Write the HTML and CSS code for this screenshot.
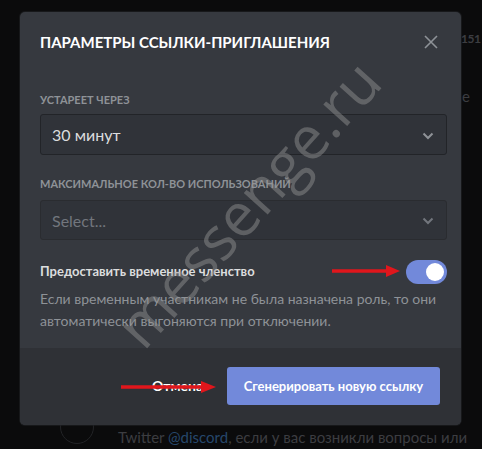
FILE: index.html
```html
<!DOCTYPE html>
<html lang="ru">
<head>
    <meta charset="UTF-8">
    <meta name="viewport" content="width=device-width, initial-scale=1.0">
    <title>Параметры ссылки-приглашения</title>
    <link rel="stylesheet" href="styles.css">
</head>
<body>
    <div class="backdrop">
        <div class="bg-text bg-top">151</div>
        <div class="bg-text bg-mid">е</div>
        <div class="bg-avatar"></div>
        <div class="bg-text bg-bottom">Twitter <span class="bg-link">@discord</span>, если у вас возникли вопросы или</div>

        <div class="modal">
            <div class="modal-header">
                <h2>Параметры ссылки-приглашения</h2>
                <svg class="close" width="16" height="16" viewBox="0 0 16 16">
                    <path d="M2 2 L14 14 M14 2 L2 14" stroke="#8e9297" stroke-width="1.6" fill="none"/>
                </svg>
            </div>

            <div class="modal-body">
                <div class="label">Устареет через</div>
                <div class="select">
                    <span>30 минут</span>
                    <svg class="chevron" width="12" height="8" viewBox="0 0 12 8">
                        <path d="M1.5 1.5 L6 6 L10.5 1.5" stroke="#8e9297" stroke-width="2" fill="none"/>
                    </svg>
                </div>

                <div class="label label-gap">Максимальное кол-во использований</div>
                <div class="select placeholder">
                    <span>Select...</span>
                    <svg class="chevron" width="12" height="8" viewBox="0 0 12 8">
                        <path d="M1.5 1.5 L6 6 L10.5 1.5" stroke="#72767d" stroke-width="2" fill="none"/>
                    </svg>
                </div>

                <div class="toggle-row">
                    <span class="toggle-title">Предоставить временное членство</span>
                    <div class="toggle"><div class="knob"></div></div>
                </div>
                <p class="note">Если временным участникам не была назначена роль, то они автоматически выгоняются при отключении.</p>
            </div>

            <div class="modal-footer">
                <button class="btn-cancel">Отмена</button>
                <button class="btn-primary">Сгенерировать новую ссылку</button>
            </div>
        </div>

        <!-- annotation arrows -->
        <svg class="arrow arrow-toggle" width="70" height="14" viewBox="0 0 70 14">
            <path d="M0 7 H56" stroke="#e0161c" stroke-width="3.5"/>
            <path d="M54 1 L68 7 L54 13 Z" fill="#e0161c"/>
        </svg>
        <svg class="arrow arrow-button" width="96" height="14" viewBox="0 0 96 14">
            <path d="M0 7 H82" stroke="#e0161c" stroke-width="3.5"/>
            <path d="M80 1 L95 7 L80 13 Z" fill="#e0161c"/>
        </svg>

        <div class="watermark">messenge.ru</div>
    </div>
</body>
</html>
```

FILE: styles.css
```css
* {
    box-sizing: border-box;
}
body {
    margin: 0;
    background: #0b0b0c;
    font-family: Lato, "Open Sans", sans-serif;
    overflow: hidden;
}
.backdrop {
    position: relative;
    width: 482px;
    height: 449px;
    padding: 12px 0 0 20px;
}
.bg-text {
    position: absolute;
    color: #3c3d41;
    font-size: 15px;
}
.bg-top {
    top: 31px;
    left: 461px;
    font-size: 12px;
    font-weight: 700;
    letter-spacing: -0.5px;
}
.bg-mid {
    top: 87px;
    left: 462px;
}
.bg-bottom {
    top: 428px;
    left: 118px;
    font-size: 15px;
    white-space: nowrap;
}
.bg-link {
    color: #26476b;
}
.bg-avatar {
    position: absolute;
    top: 410px;
    left: 60px;
    width: 34px;
    height: 34px;
    border-radius: 50%;
    border: 1px solid #222326;
}
.modal {
    position: relative;
    width: 441px;
    height: 413px;
    background: #36393f;
    border-radius: 5px;
    display: flex;
    flex-direction: column;
    overflow: hidden;
    box-shadow: 0 0 0 1px rgba(32, 34, 37, 0.6);
}
.modal-header {
    display: flex;
    align-items: center;
    justify-content: space-between;
    padding: 20px 22px 20px 20px;
    height: 60px;
}
.modal-header h2 {
    margin: 0;
    color: #ffffff;
    font-size: 15px;
    font-weight: 700;
    text-transform: uppercase;
}
.modal-body {
    flex: 1;
    padding: 20px 14px 0 20px;
}
.label {
    color: #8e9297;
    font-size: 11px;
    font-weight: 700;
    text-transform: uppercase;
    line-height: 16px;
    margin-bottom: 6px;
}
.label-gap {
    margin-top: 21px;
    margin-bottom: 8px;
}
.select {
    height: 41px;
    background: #303339;
    border: 1px solid #222428;
    border-radius: 3px;
    display: flex;
    align-items: center;
    justify-content: space-between;
    padding: 0 12px 0 11px;
    color: #dcddde;
    font-size: 16px;
}
.select.placeholder {
    height: 40px;
    border-color: #2a2c30;
    color: #72767d;
}
.chevron {
    margin-top: 2px;
}
.toggle-row {
    display: flex;
    align-items: center;
    justify-content: space-between;
    margin-top: 20px;
    height: 24px;
}
.toggle-title {
    color: #dcddde;
    font-size: 13px;
    font-weight: 700;
    margin-top: -2px;
}
.toggle {
    width: 41px;
    height: 24px;
    border-radius: 12px;
    background: #7289da;
    padding: 3px;
    display: flex;
    justify-content: flex-end;
}
.knob {
    width: 18px;
    height: 18px;
    border-radius: 50%;
    background: #ffffff;
}
.note {
    margin: 4px 0 0;
    color: #8e9297;
    font-size: 14px;
    line-height: 22px;
}
.modal-footer {
    height: 77px;
    background: #2f3136;
    display: flex;
    align-items: center;
    justify-content: flex-end;
    padding: 0 21px 2px;
    gap: 24px;
}
.btn-cancel {
    background: none;
    border: none;
    color: #ffffff;
    font-family: inherit;
    font-size: 14px;
    font-weight: 700;
    padding: 0;
}
.btn-primary {
    height: 38px;
    width: 213px;
    background: #7289da;
    color: #ffffff;
    border: none;
    border-radius: 3px;
    font-family: inherit;
    font-size: 13px;
    font-weight: 700;
}
.arrow {
    position: absolute;
}
.arrow-toggle {
    top: 264px;
    left: 332px;
}
.arrow-button {
    top: 380px;
    left: 121px;
}
.watermark {
    position: absolute;
    top: 173px;
    left: 72px;
    width: 330px;
    text-align: center;
    font-family: "Open Sans", sans-serif;
    font-size: 60px;
    color: rgba(150, 150, 150, 0.45);
    transform: rotate(-48deg);
    white-space: nowrap;
    pointer-events: none;
}
```
